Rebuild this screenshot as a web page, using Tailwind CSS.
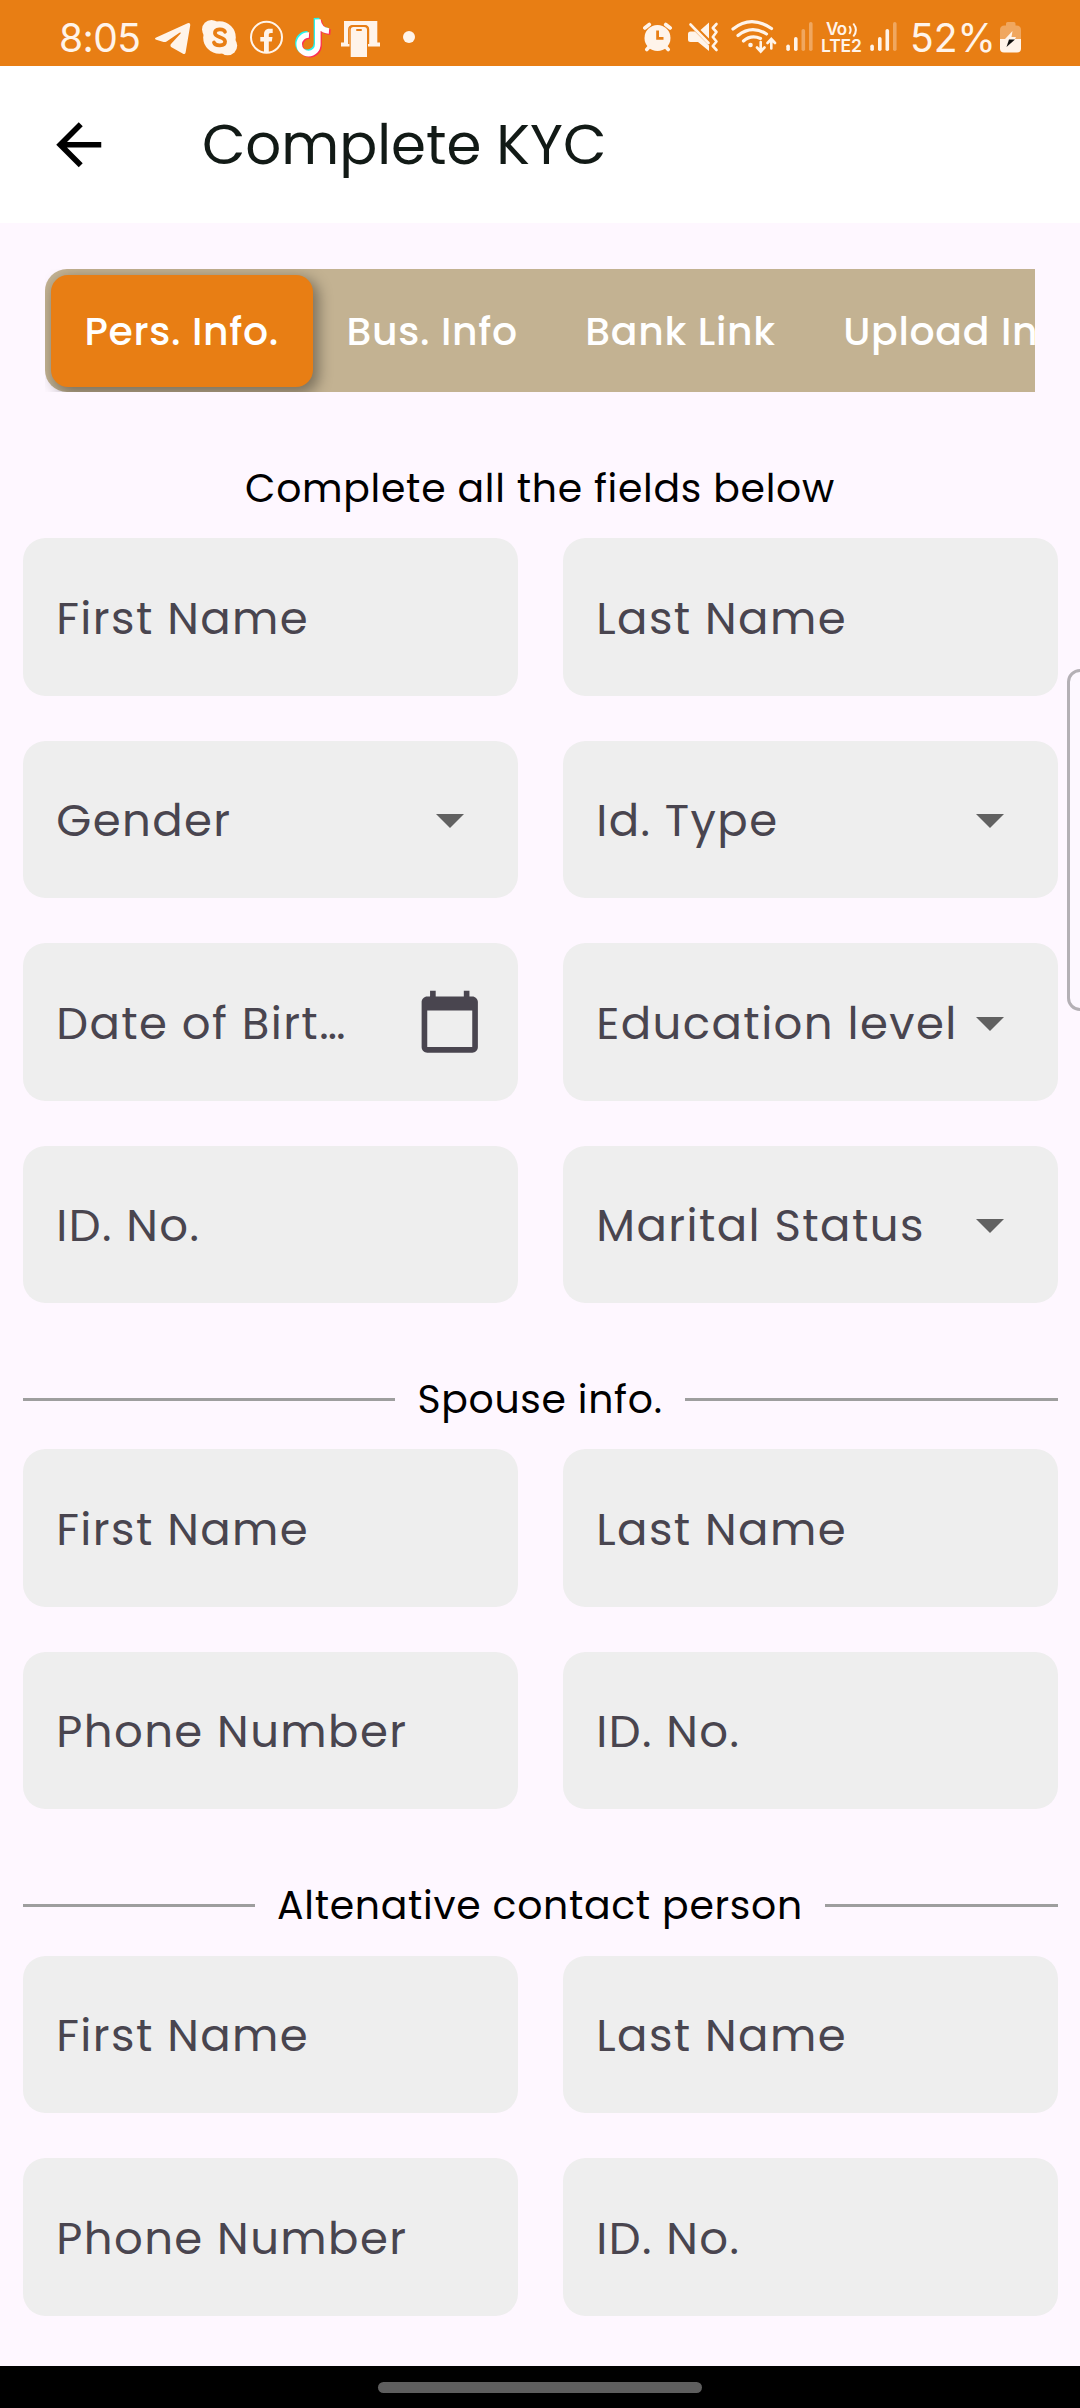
<!DOCTYPE html>
<html lang="en">
<head>
<meta charset="utf-8">
<title>Complete KYC</title>
<script src="https://cdn.jsdelivr.net/npm/@tailwindcss/browser@4"></script>
</head>
<body class="relative w-[1080px] h-[2408px] overflow-hidden flex flex-col bg-[#fef7ff] font-[Poppins,Inter,sans-serif] whitespace-nowrap">

<!-- Status bar -->
<header class="h-[66px] shrink-0 bg-[#e87e14] text-[#fff4ea] flex items-center font-[Inter,sans-serif]">
  <span class="ml-[59px] w-[96px] text-[39px] leading-[48px] tracking-[-0.6px] pt-[9px]">8:05</span>
  <!-- telegram, skype, facebook, tiktok, device, more -->
  <svg class="shrink-0" width="265" height="66" viewBox="155 0 265 66" fill="currentColor">
    <path d="M156.2 37.600 187.600 23.300Q190.600 22.400 190.200 25.400L185.600 52.600Q185 55 182.600 53.600L171.500 47.200Q169.500 45.600 171.200 43.800L180.600 33.600Q181.400 31.800 179.400 32.800L166.600 41.400Q164.800 42.400 162.800 41.800L156.200 39.800Q153.800 38.800 156.200 37.600Z"/>
    <circle cx="219.500" cy="37.500" r="16.300"/><circle cx="211.500" cy="29.500" r="9.500"/><circle cx="227.700" cy="45.700" r="9.500"/>
    <path d="M225 31.800C223.500 28.400 214.700 28.400 214.900 33.200C215.200 38.200 225 36.200 225.100 41.500C225.100 46.600 215.300 46.600 213.900 42.400" fill="none" stroke="#e87e14" stroke-width="3.700" stroke-linecap="round"/>
    <circle cx="266.500" cy="37.300" r="15.500" fill="none" stroke="currentColor" stroke-width="2"/>
    <path d="M264 52.500V41.500H260.300V37H264V34.500C264 30.500 266.500 28.800 269.500 28.800H272.700V33H270.800C269.200 33 268.800 33.800 268.800 35V37H272.500L271.800 41.500H268.800V52.500Z"/>
    <g fill="none" stroke-width="5.600">
      <path d="M307.500 33.700A9.300 9.300 0 1 0 316.500 43V18C317 25.500 321.500 30 327.500 30.500" stroke="#25f4ee"/>
      <path d="M310 36A9.300 9.300 0 1 0 319 45V20.500C320 27.500 324 31.500 330.500 32" stroke="#fe2c55"/>
      <path d="M309 35A9.300 9.300 0 1 0 317.800 44V19.500C318.700 26.500 322.500 30.500 329 31" stroke="#fff"/>
    </g>
    <path d="M344 21H377.300V42.500H380V46.500H368V29Q368 25.300 364.500 25.300H353Q349.500 25.300 349.500 29V46.500H341V42.500H344Z"/>
    <path d="M350.700 57V30Q350.700 27 353.500 27H364Q367 27 367 30V57Z"/>
    <path d="M348.800 44V29.500Q348.800 25.600 352.800 25.600H364.700Q368.500 25.600 368.500 29.500V44" fill="none" stroke="#e87e14" stroke-width="1.400"/>
    <rect x="356" y="29" width="6" height="2" rx="1" fill="#e87e14"/>
    <circle cx="409" cy="37" r="6"/>
  </svg>
  <!-- alarm, mute, wifi, signal -->
  <svg class="ml-[223px] shrink-0" width="175" height="66" viewBox="643 0 175 66" fill="currentColor">
    <circle cx="657.500" cy="38" r="13"/>
    <path d="M644.800 28 649.300 24.500M670.200 28 665.700 24.500M649.500 46.500 646.800 49.500M665.500 46.500 668.200 49.500" stroke="currentColor" stroke-width="3.600" stroke-linecap="round"/>
    <path d="M657.600 30.500V38.300H663.500" fill="none" stroke="#e87e14" stroke-width="2.800"/>
    <path d="M688 34Q688 31.500 690.500 31.500H695L709 45.500V51L698 42H690.500Q688 42 688 39.500ZM700.500 30 709 22.500V38.500Z"/>
    <path d="M690.500 24.500 708.500 43" stroke="currentColor" stroke-width="2.600" stroke-linecap="round"/>
    <path d="M716.500 24 712.800 28 716.500 32 712.800 37 716.500 41.500 712.800 46 716.500 50" fill="none" stroke="currentColor" stroke-width="2.600" stroke-linecap="round" stroke-linejoin="round"/>
    <g fill="none" stroke="currentColor" stroke-width="3.200" stroke-linecap="round">
      <path d="M733 29Q751 14.500 771.500 28.500M738 35.500Q751.500 24.500 766.500 34M743.500 41Q751 34.500 760.500 38.500"/>
      <path d="M760.700 42V50.500M757 47.500 760.700 51.500 764.500 47.500M771.300 48.500V40M767.500 43 771.300 39 775 43" stroke-width="2.600"/>
    </g>
    <circle cx="750.500" cy="45" r="2.300"/>
    <rect x="786.300" y="44.500" width="3.600" height="6.500" rx="1.800"/><rect x="794" y="37" width="3.600" height="14" rx="1.800"/>
    <g opacity=".35"><rect x="801.500" y="29" width="3.600" height="22" rx="1.800"/><rect x="809" y="22" width="3.600" height="29" rx="1.800"/></g>
  </svg>
  <!-- volte, second signal -->
  <svg class="shrink-0" width="82" height="66" viewBox="818 0 82 66" fill="currentColor">
    <text x="826" y="34.500" font-size="17" font-weight="600" font-family="Inter" textLength="21">Vo</text>
    <path d="M849.300 26Q852 30 849.300 34M853.300 23.500Q858.500 30 853.300 36.500" fill="none" stroke="currentColor" stroke-width="2"/>
    <text x="821" y="52" font-size="17.500" font-weight="600" font-family="Inter" textLength="41">LTE2</text>
    <rect x="870.300" y="44.500" width="3.600" height="6.500" rx="1.800"/><rect x="878" y="37" width="3.600" height="14" rx="1.800"/><rect x="885.500" y="29" width="3.600" height="22" rx="1.800"/>
    <rect x="893" y="22" width="3.600" height="29" rx="1.800" opacity=".35"/>
  </svg>
  <span class="ml-[10px] w-[89px] text-[39px] leading-[48px] pt-[9px]">52%</span>
  <svg class="shrink-0" width="24" height="66" viewBox="999 0 24 66" fill="currentColor">
    <path d="M1000 39V30Q1000 25.500 1004.500 25.500H1006V23.500Q1006 22 1007.500 22H1014Q1015.500 22 1015.500 23.500V25.500H1016.500Q1021 25.500 1021 30V39Z" opacity=".35"/>
    <path d="M1000 39H1021V48.500Q1021 52.500 1017 52.500H1004Q1000 52.500 1000 48.500Z"/>
    <path d="M1012.500 31 1005 39H1015L1016 37H1011.500Z"/>
    <path d="M1009 39.500H1015L1006.500 47Z" fill="#111"/>
  </svg>
</header>

<!-- App bar -->
<div class="h-[156.75px] shrink-0 bg-white flex items-center">
  <svg class="ml-[45.400px] shrink-0" width="67.5" height="67.5" viewBox="0 0 24 24"><path d="M20 11H7.830l5.590-5.590L12 4l-8 8 8 8 1.410-1.410L7.830 13H20v-2z"/></svg>
  <h1 class="ml-[89px] pt-[2px] text-[56.250px] leading-[84px] text-[#121a16]">Complete KYC</h1>
</div>

<!-- Section tabs -->
<nav class="mt-[46.25px] mx-[45px] h-[123px] shrink-0 overflow-hidden">
  <div class="h-full w-max rounded-[22px] bg-[#c3b292] px-[5.625px] pt-[5.625px] pb-[5px] flex text-[39.375px] font-medium tracking-[0.680px] text-white">
    <span class="rounded-[17px] bg-[#e87e14] px-[33.750px] pt-[2px] flex items-center shadow-[4px_5px_14px_2px_rgba(0,0,0,0.36)]">Pers. Info.</span>
    <span class="px-[33.750px] pt-[2px] flex items-center">Bus. Info</span>
    <span class="px-[33.750px] pt-[2px] flex items-center">Bank Link</span>
    <span class="px-[33.750px] pt-[2px] flex items-center">Upload Info.</span>
  </div>
</nav>

<main class="px-[22.500px] text-[45px] tracking-[1.410px] text-[#49454f]">
  <h2 class="mt-[66.500px] mb-[20.850px] h-[59px] leading-[59px] text-center text-[39.375px] text-black tracking-[0.700px]">Complete all the fields below</h2>
  <div class="grid grid-cols-2 auto-rows-[157.500px] gap-[45px]">
    <div class="rounded-[22.500px] bg-[#eee] px-[33.750px] pt-[3px] flex items-center">First Name</div>
    <div class="rounded-[22.500px] bg-[#eee] px-[33.750px] pt-[3px] flex items-center">Last Name</div>
    <div class="rounded-[22.500px] bg-[#eee] px-[33.750px] pt-[2px] flex items-center justify-between">Gender<svg class="mr-[19.700px]" width="28" height="14" viewBox="0 0 10 5" fill="#616161"><path d="M0 0l5 5 5-5z"/></svg></div>
    <div class="rounded-[22.500px] bg-[#eee] px-[33.750px] pt-[2px] flex items-center justify-between">Id. Type<svg class="mr-[19.700px]" width="28" height="14" viewBox="0 0 10 5" fill="#616161"><path d="M0 0l5 5 5-5z"/></svg></div>
    <div class="rounded-[22.500px] bg-[#eee] px-[33.750px] flex items-center justify-between"><span class="pt-[3px]">Date of Birt…</span><svg width="67.5" height="67.5" viewBox="0 0 24 24" fill="#49454f"><path d="M20 3h-1V1h-2v2H7V1H5v2H4c-1.100 0-2 .9-2 2v16c0 1.100.9 2 2 2h16c1.100 0 2-.9 2-2V5c0-1.100-.9-2-2-2zm0 18H4V8h16v13z"/></svg></div>
    <div class="rounded-[22.500px] bg-[#eee] px-[33.750px] pt-[3px] flex items-center justify-between">Education level<svg class="mr-[19.700px]" width="28" height="14" viewBox="0 0 10 5" fill="#616161"><path d="M0 0l5 5 5-5z"/></svg></div>
    <div class="rounded-[22.500px] bg-[#eee] px-[33.750px] pt-[2px] flex items-center">ID. No.</div>
    <div class="rounded-[22.500px] bg-[#eee] px-[33.750px] pt-[2px] flex items-center justify-between">Marital Status<svg class="mr-[19.700px]" width="28" height="14" viewBox="0 0 10 5" fill="#616161"><path d="M0 0l5 5 5-5z"/></svg></div>
  </div>

  <div class="mt-[66.400px] mb-[20.600px] h-[59px] flex items-center gap-[22.500px]">
    <span class="flex-1 h-[3px] bg-[#9e9e9e]"></span>
    <h2 class="leading-[59px] text-[39.375px] text-black tracking-[0.700px]">Spouse info.</h2>
    <span class="flex-1 h-[3px] bg-[#9e9e9e]"></span>
  </div>
  <div class="grid grid-cols-2 auto-rows-[157.500px] gap-[45px]">
    <div class="rounded-[22.500px] bg-[#eee] px-[33.750px] pt-[3px] flex items-center">First Name</div>
    <div class="rounded-[22.500px] bg-[#eee] px-[33.750px] pt-[3px] flex items-center">Last Name</div>
    <div class="rounded-[22.500px] bg-[#eee] px-[33.750px] pt-[3px] flex items-center">Phone Number</div>
    <div class="rounded-[22.500px] bg-[#eee] px-[33.750px] pt-[3px] flex items-center">ID. No.</div>
  </div>

  <div class="mt-[66.400px] mb-[20.850px] h-[59px] flex items-center gap-[22.500px]">
    <span class="flex-1 h-[3px] bg-[#9e9e9e]"></span>
    <h2 class="leading-[59px] text-[39.375px] text-black tracking-[0.700px]">Altenative contact person</h2>
    <span class="flex-1 h-[3px] bg-[#9e9e9e]"></span>
  </div>
  <div class="grid grid-cols-2 auto-rows-[157.500px] gap-[45px]">
    <div class="rounded-[22.500px] bg-[#eee] px-[33.750px] pt-[2px] flex items-center">First Name</div>
    <div class="rounded-[22.500px] bg-[#eee] px-[33.750px] pt-[2px] flex items-center">Last Name</div>
    <div class="rounded-[22.500px] bg-[#eee] px-[33.750px] pt-[3px] flex items-center">Phone Number</div>
    <div class="rounded-[22.500px] bg-[#eee] px-[33.750px] pt-[3px] flex items-center">ID. No.</div>
  </div>
</main>

<!-- Gesture bar -->
<footer class="mt-auto h-[42px] shrink-0 bg-black flex justify-center pt-[16px]">
  <div class="w-[324px] h-[11px] rounded-full bg-[#5e5e5e]"></div>
</footer>

<!-- Edge panel handle -->
<div class="absolute left-[1067px] top-[669px] w-[30px] h-[342px] rounded-[13px] border-[3px] border-[#b4b0b5] bg-[#fdf8ff]"></div>
</body>
</html>
